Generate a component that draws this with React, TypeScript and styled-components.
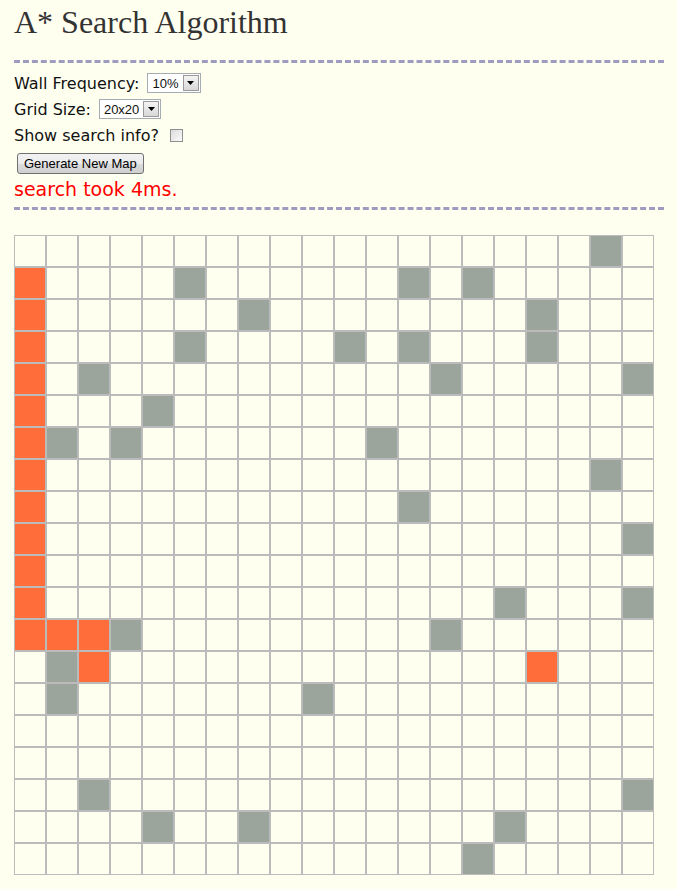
import styled, { createGlobalStyle } from "styled-components";

const GlobalStyle = createGlobalStyle`
  html, body {
    margin: 0;
    padding: 0;
    background: #fffff0;
  }
`;

const SIZE = 20;

const walls: [number, number][] = [
  [0, 18],
  [1, 5], [1, 12], [1, 14],
  [2, 7], [2, 16],
  [3, 5], [3, 10], [3, 12], [3, 16],
  [4, 2], [4, 13], [4, 19],
  [5, 4],
  [6, 1], [6, 3], [6, 11],
  [7, 18],
  [8, 12],
  [9, 19],
  [11, 15], [11, 19],
  [12, 3], [12, 13],
  [13, 1],
  [14, 1], [14, 9],
  [17, 2], [17, 19],
  [18, 4], [18, 7], [18, 15],
  [19, 14],
];

const path: [number, number][] = [
  [1, 0], [2, 0], [3, 0], [4, 0], [5, 0], [6, 0], [7, 0], [8, 0], [9, 0],
  [10, 0], [11, 0], [12, 0], [12, 1], [12, 2], [13, 2], [13, 16],
];

type CellKind = "open" | "wall" | "path";

const key = (r: number, c: number) => `${r}-${c}`;
const wallSet = new Set(walls.map(([r, c]) => key(r, c)));
const pathSet = new Set(path.map(([r, c]) => key(r, c)));

const kindOf = (r: number, c: number): CellKind => {
  if (pathSet.has(key(r, c))) return "path";
  if (wallSet.has(key(r, c))) return "wall";
  return "open";
};

const FakeSelect = ({ value }: { value: string }) => (
  <SelectBox>
    <SelectValue>{value}</SelectValue>
    <SelectArrow>
      <svg width="7" height="4" viewBox="0 0 7 4">
        <path d="M0 0 H7 L3.5 4 Z" fill="#000" />
      </svg>
    </SelectArrow>
  </SelectBox>
);

const App = () => {
  return (
    <Page>
      <GlobalStyle />
      <Title>A* Search Algorithm</Title>
      <Divider />
      <Controls>
        <Row>
          <Label>Wall Frequency:</Label>
          <FakeSelect value="10%" />
        </Row>
        <Row>
          <Label>Grid Size:</Label>
          <FakeSelect value="20x20" />
        </Row>
        <Row>
          <Label>Show search info?</Label>
          <Checkbox />
        </Row>
        <Row>
          <Button>Generate New Map</Button>
        </Row>
        <Message>search took 4ms.</Message>
      </Controls>
      <Divider />
      <Grid>
        {Array.from({ length: SIZE }, (_, r) => (
          <GridRow key={r}>
            {Array.from({ length: SIZE }, (_, c) => (
              <Cell key={c} $kind={kindOf(r, c)} />
            ))}
          </GridRow>
        ))}
      </Grid>
    </Page>
  );
};

export default App;

const Page = styled.div`
  width: 650px;
  padding: 0 0 12px 14px;
  font-family: "DejaVu Sans", Verdana, sans-serif;
  color: #111;
`;

const Title = styled.h1`
  margin: 0;
  padding-top: 4px;
  height: 56px;
  font-family: "Liberation Serif", "Times New Roman", serif;
  font-weight: normal;
  font-size: 32px;
  line-height: 36px;
  color: #333;
`;

const Divider = styled.div`
  border-bottom: 3px dashed #9e9bc0;
  height: 0;
`;

const Controls = styled.div`
  display: flex;
  flex-direction: column;
  padding: 7px 0 6px;
`;

const Row = styled.div`
  display: flex;
  align-items: center;
  gap: 8px;
  height: 26px;
`;

const Label = styled.span`
  font-size: 16px;
`;

const SelectBox = styled.span`
  display: inline-flex;
  align-items: center;
  height: 18px;
  border: 1px solid #a5acb2;
  background: #fff;
  font-family: "Liberation Sans", Arial, sans-serif;
  font-size: 13px;
`;

const SelectValue = styled.span`
  padding: 0 4px 0 4px;
`;

const SelectArrow = styled.span`
  display: flex;
  align-items: center;
  justify-content: center;
  width: 16px;
  height: 16px;
  margin-right: 1px;
  border: 1px solid #9a9a9a;
  background: linear-gradient(#f4f4f4, #d8d8d8);
  box-sizing: border-box;
`;

const Checkbox = styled.span`
  width: 11px;
  height: 11px;
  margin-left: 3px;
  border: 1px solid #8f8f8f;
  background: linear-gradient(135deg, #dcdcdc, #fafafa);
`;

const Button = styled.button`
  margin: 5px 0 0 3px;
  height: 21px;
  padding: 0 6px;
  border: 1px solid #707070;
  border-radius: 3px;
  background: linear-gradient(#f2f2f2 0%, #ebebeb 50%, #dddddd 51%, #cfcfcf 100%);
  font-family: "Liberation Sans", Arial, sans-serif;
  font-size: 13px;
  color: #000;
`;

const Message = styled.div`
  margin-top: 3px;
  font-size: 19px;
  line-height: 24px;
  color: #ff0000;
`;

const Grid = styled.div`
  display: flex;
  flex-direction: column;
  margin-top: 25px;
`;

const GridRow = styled.div`
  display: flex;
`;

const cellColors: Record<CellKind, string> = {
  open: "#fffff0",
  wall: "#9ba59c",
  path: "#ff6d3b",
};

const Cell = styled.div<{ $kind: CellKind }>`
  width: 30px;
  height: 30px;
  border: 1px solid #bbb;
  background: ${(p) => cellColors[p.$kind]};
`;
